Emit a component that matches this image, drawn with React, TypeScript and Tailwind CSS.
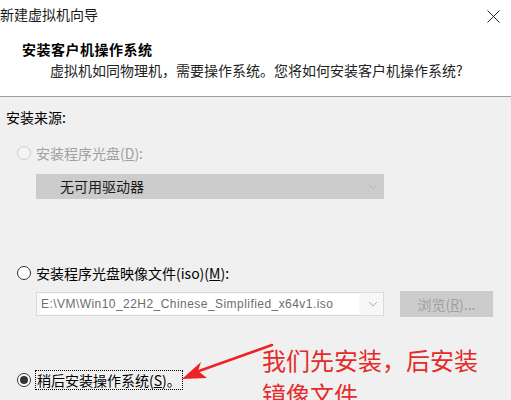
import React from "react";

const font = { fontFamily: '"Noto Sans CJK SC", "Microsoft YaHei", sans-serif' };

const Radio = ({ state }: { state: "disabled" | "off" | "on" }) => (
  <span
    className={
      state === "disabled"
        ? "w-[14px] h-[14px] rounded-full border border-[#cccccc] bg-[#f4f4f4] shrink-0"
        : "w-[14px] h-[14px] rounded-full border border-[#333333] bg-white shrink-0 flex items-center justify-center"
    }
  >
    {state === "on" && <span className="w-[8px] h-[8px] rounded-full bg-[#333333]" />}
  </span>
);

const Chevron = ({ color }: { color: string }) => (
  <svg width="10" height="6" viewBox="0 0 10 6" className="shrink-0">
    <path d="M1 1 L5 5 L9 1" fill="none" stroke={color} strokeWidth="1" />
  </svg>
);

export default function App() {
  return (
    <div
      className="relative w-[511px] h-[400px] overflow-hidden bg-[#f0f0f0] text-[14px] text-black"
      style={font}
    >
      {/* Header */}
      <div className="bg-white h-[97px] border-b border-[#a0a0a0] pt-[4px]">
        <div className="flex items-center justify-between pr-[11px] leading-[20px]">
          <span className="text-[#1a1a1a]">新建虚拟机向导</span>
          <svg width="13" height="13" viewBox="0 0 13 13" className="mt-[4px]">
            <path d="M0.5 0.5 L12.5 12.5 M12.5 0.5 L0.5 12.5" stroke="#222" strokeWidth="1" />
          </svg>
        </div>
        <div className="pl-[22px] mt-[15px] font-bold tracking-[0.5px] leading-[20px]">
          安装客户机操作系统
        </div>
        <div className="pl-[50px] mt-[1px] leading-[20px] text-[#222]">
          虚拟机如同物理机，需要操作系统。您将如何安装客户机操作系统?
        </div>
      </div>

      {/* Body */}
      <div className="pl-[6px] pt-[10px] leading-[20px]">安装来源:</div>

      <div className="flex items-center gap-[5px] pl-[17px] mt-[16px] leading-[20px]">
        <Radio state="disabled" />
        <span className="text-[#a0a0a0]">
          安装程序光盘(<span className="underline">D</span>):
        </span>
      </div>
      <div className="ml-[36px] mt-[11px] w-[348px] h-[25px] bg-[#cccccc] flex items-center justify-between pl-[24px] pr-[6px]">
        <span className="text-[#1a1a1a]">无可用驱动器</span>
        <Chevron color="#b8b8b8" />
      </div>

      <div className="flex items-center gap-[5px] pl-[17px] mt-[64px] leading-[20px]">
        <Radio state="off" />
        <span>
          安装程序光盘映像文件(iso)(<span className="underline">M</span>):
        </span>
      </div>
      <div className="flex items-center mt-[8px] pl-[36px]">
        <div className="w-[348px] h-[24px] bg-[#f7f7f7] border border-[#dadada] flex items-center justify-between pl-[4px] pr-[5px]">
          <span
            className="text-[#6d6d6d] bg-white pr-[26px] leading-[20px] text-[12px] tracking-[0.45px]"
            style={{ fontFamily: '"Liberation Sans", Arial, sans-serif' }}
          >
            E:\VM\Win10_22H2_Chinese_Simplified_x64v1.iso
          </span>
          <Chevron color="#b0b0b0" />
        </div>
        <div className="ml-[16px] w-[93px] h-[26px] bg-[#cccccc] flex items-center justify-center text-[#a0a0a0]">
          浏览(<span className="underline">R</span>)...
        </div>
      </div>

      <div className="flex items-center gap-[4px] pl-[17px] mt-[53px] leading-[18px]">
        <Radio state="on" />
        <span className="border border-dotted border-black px-[1px]">
          稍后安装操作系统(<span className="underline">S</span>)。
        </span>
      </div>

      {/* Annotation */}
      <svg
        className="absolute left-0 top-0 pointer-events-none"
        width="511"
        height="400"
        viewBox="0 0 511 400"
      >
        <path d="M272 345 L199 371" stroke="#ee2222" strokeWidth="2.5" strokeLinecap="round" />
        <path d="M182 379 L201 362 L198 371 L207 378 Z" fill="#ee2222" />
      </svg>
      <div className="absolute left-[262px] top-[343px] text-[24px] leading-[34px] text-[#e52b2b]">
        我们先安装，后安装
        <br />
        镜像文件
      </div>
    </div>
  );
}
